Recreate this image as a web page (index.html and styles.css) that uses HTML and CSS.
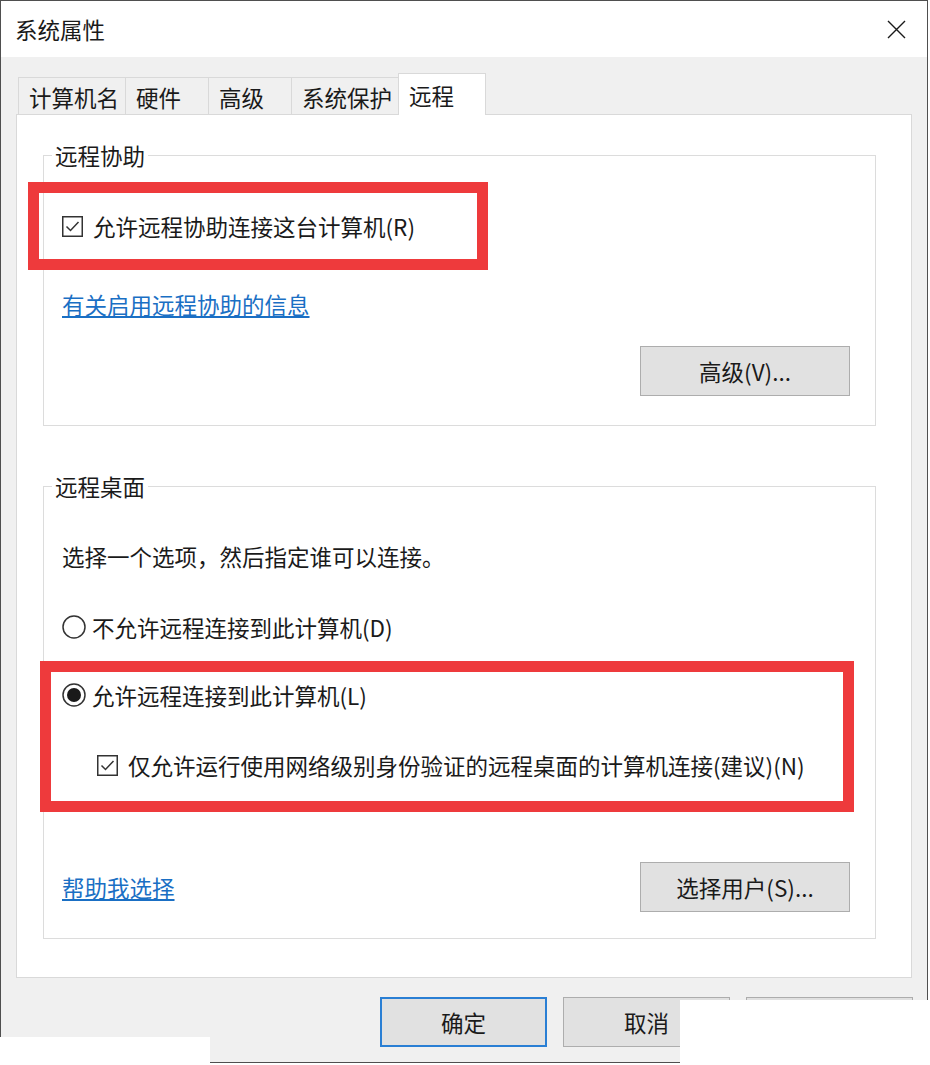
FILE: index.html
```html
<!DOCTYPE html>
<html lang="zh-CN">
<head>
    <meta charset="UTF-8">
    <title>系统属性</title>
    <link rel="stylesheet" href="styles.css">
</head>
<body>
    <div class="window">
        <div class="titlebar">
            <span class="title">系统属性</span>
            <svg class="close" width="19" height="19" viewBox="0 0 19 19">
                <path d="M1 1 L18 18 M18 1 L1 18" stroke="#1a1a1a" stroke-width="1.4" fill="none"/>
            </svg>
        </div>

        <div class="dialog-body">
            <div class="tabs">
                <div class="tab">计算机名</div>
                <div class="tab">硬件</div>
                <div class="tab">高级</div>
                <div class="tab">系统保护</div>
                <div class="tab active">远程</div>
            </div>

            <div class="panel">
                <fieldset class="group">
                    <legend>远程协助</legend>
                    <div class="mark mark-assist">
                        <label class="option">
                            <svg class="checkbox" width="21" height="21" viewBox="0 0 21 21">
                                <rect x="0.75" y="0.75" width="19.5" height="19.5" fill="#fff" stroke="#333" stroke-width="1.5"/>
                                <path d="M4.5 10.5 L8.5 14.5 L16.5 6" fill="none" stroke="#333" stroke-width="1.5"/>
                            </svg>
                            允许远程协助连接这台计算机(R)
                        </label>
                    </div>
                    <p class="info"><a href="#">有关启用远程协助的信息</a></p>
                    <div class="actions">
                        <button class="btn">高级(V)...</button>
                    </div>
                </fieldset>

                <fieldset class="group group-desktop">
                    <legend>远程桌面</legend>
                    <p class="intro">选择一个选项，然后指定谁可以连接。</p>
                    <label class="option radio-row">
                        <svg class="radio" width="24" height="24" viewBox="0 0 24 24">
                            <circle cx="12" cy="12" r="11" fill="#fff" stroke="#333" stroke-width="1.5"/>
                        </svg>
                        不允许远程连接到此计算机(D)
                    </label>
                    <div class="mark mark-desktop">
                        <label class="option radio-row">
                            <svg class="radio" width="24" height="24" viewBox="0 0 24 24">
                                <circle cx="12" cy="12" r="11" fill="#fff" stroke="#333" stroke-width="1.5"/>
                                <circle cx="12" cy="12" r="7" fill="#1a1a1a"/>
                            </svg>
                            允许远程连接到此计算机(L)
                        </label>
                        <label class="option sub-option">
                            <svg class="checkbox" width="21" height="21" viewBox="0 0 21 21">
                                <rect x="0.75" y="0.75" width="19.5" height="19.5" fill="#fff" stroke="#333" stroke-width="1.5"/>
                                <path d="M4.5 10.5 L8.5 14.5 L16.5 6" fill="none" stroke="#333" stroke-width="1.5"/>
                            </svg>
                            仅允许运行使用网络级别身份验证的远程桌面的计算机连接(建议)(N)
                        </label>
                    </div>
                    <div class="group-footer">
                        <a href="#">帮助我选择</a>
                        <button class="btn">选择用户(S)...</button>
                    </div>
                </fieldset>
            </div>

            <div class="footer">
                <button class="btn btn-default">确定</button>
                <button class="btn">取消</button>
                <button class="btn"></button>
            </div>
        </div>
    </div>

    <!-- blank strips pasted over the bottom corners -->
    <div class="cover cover-left"></div>
    <div class="cover cover-right"></div>
</body>
</html>
```

FILE: styles.css
```css
* {
    box-sizing: border-box;
}

body {
    margin: 0;
    background-color: #fff;
    font-family: "Noto Sans CJK SC", "Microsoft YaHei", sans-serif;
    font-size: 22.5px;
    color: #1a1a1a;
}

.window {
    width: 928px;
    height: 1063px;
    border: 1px solid #4f4f4f;
    background-color: #f0f0f0;
}

.titlebar {
    height: 56px;
    background-color: #fff;
    display: flex;
    align-items: center;
    justify-content: space-between;
    padding: 0 21px 0 14px;
}

.title {
    line-height: 30px;
}

.dialog-body {
    padding: 16px 0 0 15px;
}

/* tab strip */
.tabs {
    display: flex;
    align-items: flex-end;
    height: 41px;
    margin-left: 2px;
}

.tab {
    height: 37px;
    min-width: 84px;
    padding: 2px 6px 0 10px;
    margin-right: -1px;
    border: 1px solid #d9d9d9;
    border-bottom: none;
    background-color: #f0f0f0;
    display: flex;
    align-items: center;
}

.tab.active {
    position: relative;
    height: 42px;
    margin-bottom: -1px;
    padding-top: 0;
    min-width: 88px;
    background-color: #fff;
}

.panel {
    width: 896px;
    height: 864px;
    border: 1px solid #d9d9d9;
    background-color: #fff;
    padding-left: 26px;
}

/* group boxes */
.group {
    width: 833px;
    min-width: 0;
    margin: 25px 0 0 0;
    border: 1px solid #dcdcdc;
    padding: 0 25px 29px 18px;
}

.group legend {
    padding: 0 3px;
    margin-left: -10px;
    line-height: 30px;
}

.group-desktop {
    margin-top: 45px;
    padding-bottom: 26px;
}

.option {
    display: flex;
    align-items: center;
    height: 30px;
    line-height: 30px;
    white-space: nowrap;
}

.checkbox {
    margin-right: 10px;
    flex-shrink: 0;
}

.radio {
    margin-right: 6px;
    flex-shrink: 0;
}

/* red highlight frames */
.mark {
    border: 11px solid #ee3a3c;
}

.mark-assist {
    width: 460px;
    height: 88px;
    margin: 12px 0 0 -34px;
    padding-left: 23px;
    display: flex;
    align-items: center;
}

.mark-desktop {
    width: 814px;
    margin: 19px 0 0 -22px;
    padding: 8px 0 21px 11px;
}

.sub-option {
    margin: 40px 0 0 35px;
}

.info,
.intro {
    margin: 0;
    line-height: 30px;
}

.info {
    margin-top: 19px;
}

.intro {
    margin-top: 40px;
}

.intro + .radio-row {
    margin-top: 41px;
}

a {
    color: #1a6fc4;
    text-decoration: underline;
}

.actions {
    display: flex;
    justify-content: flex-end;
    margin-top: 27px;
}

.group-footer {
    display: flex;
    align-items: center;
    justify-content: space-between;
    margin-top: 50px;
    line-height: 30px;
}

/* push buttons */
.btn {
    width: 210px;
    height: 50px;
    border: 1px solid #adadad;
    background-color: #e1e1e1;
    font: inherit;
    color: #1a1a1a;
    padding: 0;
}

.footer {
    display: flex;
    justify-content: flex-end;
    gap: 16px;
    margin-top: 19px;
    padding-right: 14px;
}

.footer .btn {
    width: 167px;
}

.btn-default {
    border: 2px solid #2a7fd4;
}

.cover {
    position: absolute;
    background-color: #fff;
}

.cover-left {
    left: 0;
    top: 1037px;
    width: 210px;
    height: 28px;
}

.cover-right {
    left: 680px;
    top: 1000px;
    width: 250px;
    height: 65px;
}
```
